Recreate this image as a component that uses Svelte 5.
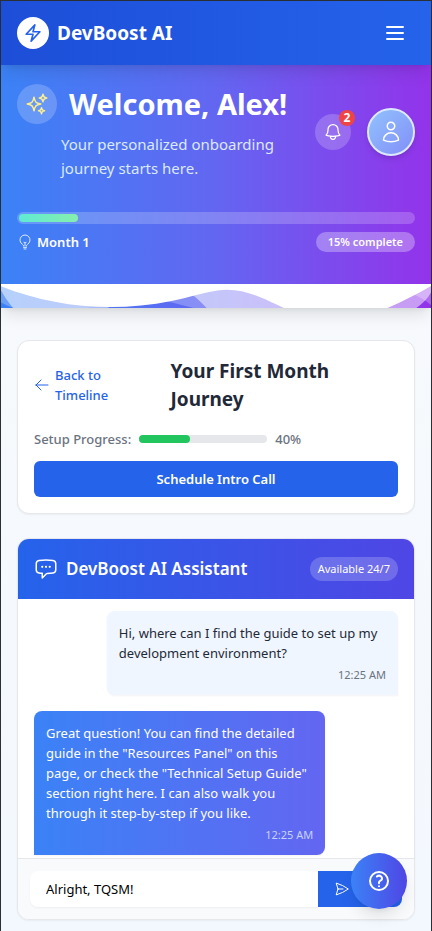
<script>
  let progress = $state(15);
  let setup = $state(40);
  let draft = $state('Alright, TQSM!');

  const messages = [
    {
      from: 'user',
      text: 'Hi, where can I find the guide to set up my development environment?',
      time: '12:25 AM'
    },
    {
      from: 'assistant',
      text: 'Great question! You can find the detailed guide in the "Resources Panel" on this page, or check the "Technical Setup Guide" section right here. I can also walk you through it step-by-step if you like.',
      time: '12:25 AM'
    }
  ];

  const icons = {
    bolt: 'M3.75 13.5l10.5-11.25L12 10.5h8.25L9.75 21.75 12 13.5H3.75z',
    menu: 'M4 6h16M4 12h16M4 18h16',
    sparkles:
      'M9.813 15.904L9 18.75l-.813-2.846a4.5 4.5 0 00-3.09-3.09L2.25 12l2.846-.813a4.5 4.5 0 003.09-3.09L9 5.25l.813 2.846a4.5 4.5 0 003.09 3.09L15.75 12l-2.846.813a4.5 4.5 0 00-3.09 3.09zM18.259 8.715L18 9.75l-.259-1.035a3.375 3.375 0 00-2.455-2.456L14.25 6l1.036-.259a3.375 3.375 0 002.455-2.456L18 2.25l.259 1.035a3.375 3.375 0 002.456 2.456L21.75 6l-1.035.259a3.375 3.375 0 00-2.456 2.456zM16.894 20.567L16.5 21.75l-.394-1.183a2.25 2.25 0 00-1.423-1.423L13.5 18.75l1.183-.394a2.25 2.25 0 001.423-1.423l.394-1.183.394 1.183a2.25 2.25 0 001.423 1.423l1.183.394-1.183.394a2.25 2.25 0 00-1.423 1.423z',
    bell: 'M14.857 17.082a23.848 23.848 0 005.454-1.31A8.967 8.967 0 0118 9.75v-.7V9A6 6 0 006 9v.75a8.967 8.967 0 01-2.312 6.022c1.733.64 3.56 1.085 5.455 1.31m5.714 0a24.255 24.255 0 01-5.714 0m5.714 0a3 3 0 11-5.714 0',
    user: 'M15.75 6a3.75 3.75 0 11-7.5 0 3.75 3.75 0 017.5 0zM4.501 20.118a7.5 7.5 0 0114.998 0A17.933 17.933 0 0112 21.75c-2.676 0-5.216-.584-7.499-1.632z',
    bulb: 'M12 18v-5.25m0 0a6.01 6.01 0 001.5-.189m-1.5.189a6.01 6.01 0 01-1.5-.189m3.75 7.478a12.06 12.06 0 01-4.5 0m3.75 2.383a14.406 14.406 0 01-3 0M14.25 18v-.192c0-.983.658-1.823 1.508-2.316a7.5 7.5 0 10-7.517 0c.85.493 1.509 1.333 1.509 2.316V18',
    back: 'M10.5 19.5L3 12m0 0l7.5-7.5M3 12h18',
    chat: 'M8.625 9.75a.375.375 0 11-.75 0 .375.375 0 01.75 0zm0 0H8.25m4.125 0a.375.375 0 11-.75 0 .375.375 0 01.75 0zm0 0H12m4.125 0a.375.375 0 11-.75 0 .375.375 0 01.75 0zm0 0h-.375m-13.5 3.01c0 1.6 1.123 2.994 2.707 3.227 1.087.16 2.185.283 3.293.369V21l4.184-4.183a1.14 1.14 0 01.778-.332 48.294 48.294 0 005.83-.498c1.585-.233 2.708-1.626 2.708-3.228V6.741c0-1.602-1.123-2.995-2.707-3.228A48.394 48.394 0 0012 3c-2.392 0-4.744.175-7.043.513C3.373 3.746 2.25 5.14 2.25 6.741v6.018z',
    send: 'M6 12L3.269 3.126A59.768 59.768 0 0121.485 12 59.77 59.77 0 013.27 20.876L5.999 12zm0 0h7.5',
    help: 'M9.879 7.519c1.171-1.025 3.071-1.025 4.242 0 1.172 1.025 1.172 2.687 0 3.712-.203.179-.43.326-.67.442-.745.361-1.45.999-1.45 1.827v.75M21 12a9 9 0 11-18 0 9 9 0 0118 0zm-9 5.25h.008v.008H12v-.008z'
  };
</script>

{#snippet icon(name, size = 24, weight = 1.5)}
  <svg
    width={size}
    height={size}
    viewBox="0 0 24 24"
    fill="none"
    stroke="currentColor"
    stroke-width={weight}
    stroke-linecap="round"
    stroke-linejoin="round"
    aria-hidden="true"
  >
    <path d={icons[name]} />
  </svg>
{/snippet}

<div class="page">
  <header class="topbar">
    <a class="brand" href="#home">
      <span class="brand-mark">{@render icon('bolt', 20, 2)}</span>
      <span class="brand-name">DevBoost AI</span>
    </a>
    <button class="menu" type="button" aria-label="Open menu">{@render icon('menu', 24, 2)}</button>
  </header>

  <section class="hero">
    <div class="hero-body">
      <div class="hero-row">
        <div>
          <div class="welcome">
            <span class="spark">{@render icon('sparkles')}</span>
            <h1>Welcome, Alex!</h1>
          </div>
          <p class="tagline">Your personalized onboarding journey starts here.</p>
        </div>
        <div class="account">
          <button class="bell" type="button" aria-label="Notifications">
            {@render icon('bell', 20)}
            <span class="badge">2</span>
          </button>
          <button class="avatar" type="button" aria-label="Profile">{@render icon('user')}</button>
        </div>
      </div>
      <div class="track">
        <div class="track-fill" style="width: {progress}%"></div>
      </div>
      <div class="month-row">
        <span class="month">{@render icon('bulb', 16)}Month 1</span>
        <span class="complete">{progress}% complete</span>
      </div>
    </div>
    <div class="waves">
      <svg viewBox="0 0 1200 120" preserveAspectRatio="none" fill="#fff" aria-hidden="true">
        <path opacity=".25" d="M0,0V46.29c47.79,22.2,103.59,32.17,158,28,70.36-5.37,136.33-33.31,206.8-37.5C438.64,32.43,512.34,53.67,583,72.05c69.27,18,138.3,24.88,209.4,13.08,36.15-6,69.85-17.84,104.45-29.34C989.49,25,1113-14.29,1200,52.47V0Z" />
        <path opacity=".5" d="M0,0V15.81C13,36.92,27.64,56.86,47.69,72.05,99.41,111.27,165,111,224.58,91.58c31.15-10.15,60.09-26.07,89.67-39.8,40.92-19,84.73-46,130.83-49.67,36.26-2.85,70.9,9.42,98.6,31.56,31.77,25.39,62.32,62,103.63,73,40.44,10.79,81.35-6.69,119.13-24.28s75.16-39,116.92-43.05c59.73-5.85,113.28,22.88,168.9,38.84,30.2,8.66,59,6.17,87.09-7.5,22.43-10.89,48-26.93,60.65-49.24V0Z" />
        <path d="M0,0V5.63C149.93,59,314.09,71.32,475.83,42.57c43-7.64,84.23-20.12,127.61-26.46,59-8.63,112.48,12.24,165.56,35.4C827.93,77.22,886,95.24,951.2,90c86.53-7,172.46-45.71,248.8-84.81V0Z" />
      </svg>
    </div>
  </section>

  <main>
    <section class="card journey">
      <div class="journey-head">
        <a class="back" href="#timeline">{@render icon('back', 16)}<span>Back to<br />Timeline</span></a>
        <h2>Your First Month Journey</h2>
      </div>
      <div class="setup">
        <span>Setup Progress:</span>
        <div class="setup-track"><div class="setup-fill" style="width: {setup}%"></div></div>
        <span>{setup}%</span>
      </div>
      <button class="schedule" type="button">Schedule Intro Call</button>
    </section>

    <section class="card chat">
      <div class="chat-head">
        <div class="chat-title">
          {@render icon('chat')}
          <h3>DevBoost AI Assistant</h3>
        </div>
        <span class="available">Available 24/7</span>
      </div>
      <div class="messages">
        {#each messages as message}
          <div class="bubble {message.from}">
            <p>{message.text}</p>
            <time>{message.time}</time>
          </div>
        {/each}
      </div>
      <form class="composer" onsubmit={(e) => e.preventDefault()}>
        <input type="text" aria-label="Message" bind:value={draft} />
        <button type="submit" aria-label="Send">{@render icon('send', 16)}</button>
      </form>
    </section>
  </main>

  <button class="fab" type="button" aria-label="Help">{@render icon('help', 24, 2)}</button>
</div>

<style>
  :global(body) {
    margin: 0;
  }
  .page,
  .page :global(*) {
    box-sizing: border-box;
  }
  .page {
    min-height: 100vh;
    border: 1px solid #2b3035;
    border-bottom: 0;
    background: linear-gradient(to bottom, #f9fafb, #f3f8fe);
    font-family: 'Noto Sans', 'Open Sans', sans-serif;
    font-size: 13px;
    line-height: 20px;
    color: #1f2937;
  }
  h1,
  h2,
  h3,
  p {
    margin: 0;
  }
  button,
  input {
    font: inherit;
    border: 0;
    padding: 0;
    margin: 0;
  }
  button {
    cursor: pointer;
  }
  a {
    text-decoration: none;
  }
  svg {
    display: block;
    flex: none;
  }

  .topbar {
    position: relative;
    z-index: 1;
    display: flex;
    align-items: center;
    justify-content: space-between;
    height: 64px;
    padding: 0 16px;
    background: linear-gradient(to right, #1d4ed8, #2563eb);
    box-shadow: 0 10px 15px -3px rgb(0 0 0 / 0.1), 0 4px 6px -4px rgb(0 0 0 / 0.1);
  }
  .brand {
    display: flex;
    align-items: center;
    gap: 8px;
    color: #fff;
  }
  .brand-mark {
    display: grid;
    place-items: center;
    width: 32px;
    height: 32px;
    border-radius: 50%;
    background: #fff;
    color: #2563eb;
  }
  .brand-name {
    font-size: 19px;
    line-height: 28px;
    font-weight: 700;
  }
  .menu {
    padding: 8px;
    background: none;
    color: #fff;
  }

  .hero {
    background: linear-gradient(to right, #3b82f6, #6366f1, #9333ea);
    box-shadow: 0 10px 15px -3px rgb(0 0 0 / 0.1), 0 4px 6px -4px rgb(0 0 0 / 0.1);
  }
  .hero-body {
    padding: 19px 16px 32px;
  }
  .hero-row {
    display: flex;
    align-items: center;
    justify-content: space-between;
  }
  .welcome {
    display: flex;
    align-items: center;
    gap: 12px;
    color: #fff;
  }
  h1 {
    font-size: 29px;
    line-height: 40px;
    font-weight: 700;
    white-space: nowrap;
  }
  .spark {
    display: grid;
    place-items: center;
    width: 40px;
    height: 40px;
    border-radius: 50%;
    background: rgb(255 255 255 / 0.2);
    color: #fef08a;
  }
  .tagline {
    margin: 8px 0 0 44px;
    font-size: 15px;
    line-height: 24px;
    color: #dbeafe;
  }
  .account {
    display: flex;
    align-items: center;
    gap: 16px;
  }
  .bell {
    position: relative;
    display: grid;
    place-items: center;
    width: 36px;
    height: 36px;
    border-radius: 50%;
    background: rgb(255 255 255 / 0.2);
    color: #fff;
  }
  .badge {
    position: absolute;
    top: -4px;
    right: -4px;
    width: 16px;
    height: 16px;
    border-radius: 50%;
    background: #ef4444;
    font-size: 12px;
    line-height: 16px;
    font-weight: 700;
    text-align: center;
  }
  .avatar {
    display: grid;
    place-items: center;
    width: 48px;
    height: 48px;
    border: 2px solid #dbeafe;
    border-radius: 50%;
    background: linear-gradient(to bottom right, #93c5fd, #818cf8) border-box;
    color: #fff;
    box-shadow: 0 4px 6px -1px rgb(0 0 0 / 0.1), 0 2px 4px -2px rgb(0 0 0 / 0.1);
  }
  .track {
    height: 12px;
    margin-top: 32px;
    padding: 2px;
    border-radius: 6px;
    background: rgb(255 255 255 / 0.2);
  }
  .track-fill {
    height: 8px;
    border-radius: 4px;
    background: linear-gradient(to right, #5eead4, #86efac);
  }
  .month-row {
    display: flex;
    align-items: center;
    justify-content: space-between;
    margin-top: 8px;
    color: #fff;
    font-weight: 600;
  }
  .month {
    display: flex;
    align-items: center;
    gap: 4px;
  }
  .month :global(svg) {
    color: #dbeafe;
  }
  .complete {
    padding: 0 12px;
    border-radius: 10px;
    background: rgb(255 255 255 / 0.3);
    font-size: 11px;
  }
  .waves {
    height: 24px;
    overflow: hidden;
  }
  .waves svg {
    width: 100%;
    height: 48px;
  }

  main {
    display: flex;
    flex-direction: column;
    gap: 24px;
    padding: 32px 16px 11px;
  }
  .card {
    border: 1px solid #e5e7eb;
    border-radius: 12px;
    background: #fff;
    box-shadow: 0 1px 2px rgb(0 0 0 / 0.05);
  }
  .journey {
    padding: 16px;
  }
  .journey-head {
    display: grid;
    grid-template-columns: 3fr 5fr;
    align-items: center;
  }
  .back {
    display: flex;
    align-items: center;
    gap: 5px;
    color: #2563eb;
    font-weight: 500;
  }
  h2 {
    font-size: 19px;
    line-height: 28px;
    font-weight: 700;
  }
  .setup {
    display: flex;
    align-items: center;
    gap: 8px;
    margin-top: 16px;
    color: #6b7280;
    font-weight: 500;
  }
  .setup-track {
    width: 128px;
    height: 8px;
    border-radius: 4px;
    background: #e5e7eb;
  }
  .setup-fill {
    height: 8px;
    border-radius: 4px;
    background: #22c55e;
  }
  .schedule {
    display: block;
    width: 100%;
    height: 36px;
    margin-top: 12px;
    border-radius: 6px;
    background: #2563eb;
    color: #fff;
    font-weight: 600;
  }

  .chat {
    overflow: hidden;
  }
  .chat-head {
    display: flex;
    align-items: center;
    justify-content: space-between;
    height: 60px;
    padding: 0 16px;
    background: linear-gradient(to right, #2563eb, #4f46e5);
    color: #fff;
  }
  .chat-title {
    display: flex;
    align-items: center;
    gap: 8px;
  }
  h3 {
    font-size: 17px;
    line-height: 28px;
    font-weight: 600;
  }
  .available {
    padding: 4px 8px;
    border-radius: 12px;
    background: rgb(255 255 255 / 0.2);
    font-size: 11px;
    line-height: 16px;
  }
  .messages {
    display: flex;
    flex-direction: column;
    gap: 16px;
    padding: 12px 16px 3px;
  }
  .bubble {
    width: 80%;
    padding: 12px;
    border-radius: 8px;
    box-shadow: 0 1px 2px rgb(0 0 0 / 0.05);
  }
  .bubble time {
    display: block;
    margin-top: 4px;
    font-size: 11px;
    line-height: 16px;
    text-align: right;
  }
  .user {
    align-self: flex-end;
    border-bottom-right-radius: 0;
    background: #eff6ff;
  }
  .user time {
    color: #6b7280;
  }
  .assistant {
    border-bottom-left-radius: 0;
    background: linear-gradient(to right, #3b82f6, #6366f1);
    color: #fff;
  }
  .assistant time {
    color: #c7d2fe;
  }
  .composer {
    display: flex;
    padding: 12px;
    border-top: 1px solid #e5e7eb;
    background: #f9fafb;
  }
  .composer input {
    flex: 1;
    min-width: 0;
    height: 36px;
    padding: 0 16px;
    border-radius: 8px 0 0 8px;
    background: #fff;
    color: #000;
    box-shadow: 0 1px 2px rgb(0 0 0 / 0.05);
  }
  .composer button {
    width: 84px;
    padding: 0 16px;
    border-radius: 0 8px 8px 0;
    background: #2563eb;
    color: #fff;
  }
  .fab {
    position: fixed;
    right: 25px;
    bottom: 22px;
    z-index: 2;
    display: grid;
    place-items: center;
    width: 56px;
    height: 56px;
    border-radius: 50%;
    background: linear-gradient(to right, #3b82f6, #4f46e5);
    color: #fff;
    box-shadow: 0 10px 15px -3px rgb(0 0 0 / 0.1), 0 4px 6px -4px rgb(0 0 0 / 0.1);
  }
</style>
